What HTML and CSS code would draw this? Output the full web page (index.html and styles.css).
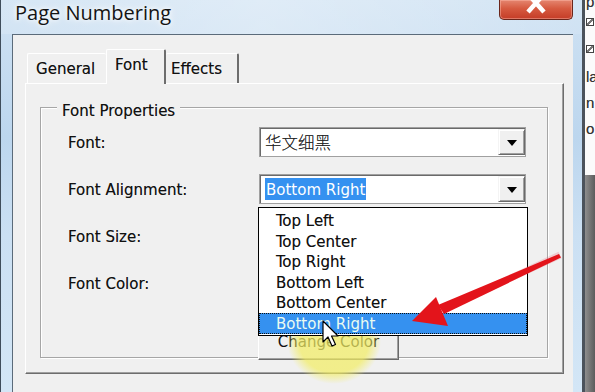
FILE: index.html
```html
<!DOCTYPE html>
<html>
<head>
<meta charset="utf-8">
<title>Page Numbering</title>
<link rel="stylesheet" href="styles.css">
</head>
<body>
<div class="screen">
  <div class="window">
    <div class="titlebar">
      <span class="title">Page Numbering</span>
      <div class="close">
        <svg width="20" height="14" viewBox="0 0 20 14"><path d="M2 -6 L18 12 M18 -6 L2 12" stroke="#fff" stroke-width="4.5" fill="none"/></svg>
      </div>
    </div>
    <div class="client">
      <div class="tabctl">
        <div class="tabs">
          <div class="tab tab-general">General</div>
          <div class="tab tab-font">Font</div>
          <div class="tab tab-effects">Effects</div>
        </div>
        <div class="panel">
          <div class="group">
            <div class="group-title">Font Properties</div>
            <div class="form">
              <div class="label">Font:</div>
              <div class="combo">
                <span class="val cjk">华文细黑</span>
                <span class="drop"><svg width="10" height="6" viewBox="0 0 10 6"><path d="M0 0 H10 L5 6 Z" fill="#000"/></svg></span>
              </div>
              <div class="label">Font Alignment:</div>
              <div class="combo">
                <span class="val"><span class="sel">Bottom Right</span></span>
                <span class="drop"><svg width="10" height="6" viewBox="0 0 10 6"><path d="M0 0 H10 L5 6 Z" fill="#000"/></svg></span>
                <ul class="list">
                  <li>Top Left</li>
                  <li>Top Center</li>
                  <li>Top Right</li>
                  <li>Bottom Left</li>
                  <li>Bottom Center</li>
                  <li class="on">Bottom Right</li>
                </ul>
              </div>
              <div class="label">Font Size:</div>
              <div class="combo">
                <span class="val"></span>
                <span class="drop"><svg width="10" height="6" viewBox="0 0 10 6"><path d="M0 0 H10 L5 6 Z" fill="#000"/></svg></span>
              </div>
              <div class="label">Font Color:</div>
              <div class="swatch"></div>
              <button class="btn">Change Color</button>
            </div>
          </div>
        </div>
      </div>
    </div>
  </div>
  <div class="desk">
    <div class="page">
      <span class="frag frag-pr">pr</span>
      <span class="chk"></span>
      <span class="chk chk2"></span>
      <span class="frag frag-la">la</span>
      <span class="frag frag-n">n</span>
      <span class="frag frag-o">o</span>
    </div>
    <div class="shade"></div>
  </div>

  <div class="spot"></div>
  <svg class="arrow" width="595" height="392" viewBox="0 0 595 392">
    <path d="M560 255 L442 310" stroke="rgba(235,90,110,0.25)" stroke-width="7" fill="none"/>
    <path d="M559 254 L561 257.5 L444 314 L438 305 Z" fill="#e3141b"/>
    <path d="M412 321 L436 297 L448 326 Z" fill="#e3141b"/>
  </svg>
  <svg class="cursor" width="18" height="28" viewBox="0 0 18 28">
    <path d="M1 1 L1 22 L6 17 L10 26 L13.5 24.5 L9.5 16 L16 16 Z" fill="#fff" stroke="#000" stroke-width="1.2" stroke-linejoin="round"/>
  </svg>
</div>
</body>
</html>
```

FILE: styles.css
```css
* {
  box-sizing: border-box;
  margin: 0;
  padding: 0;
}

html, body {
  width: 595px;
  height: 392px;
  overflow: hidden;
}

body {
  font-family: "DejaVu Sans Condensed", "DejaVu Sans", sans-serif;
  font-stretch: semi-condensed;
  font-size: 16.7px;
  color: #111;
  text-shadow: 0 0 0.6px rgba(0, 0, 0, 0.45);
  background: #fff;
}

.screen {
  position: relative;
  display: flex;
  width: 595px;
  height: 392px;
}

/* window frame */
.window {
  width: 585px;
  display: flex;
  flex-direction: column;
  border-left: 1px solid #3f4d5b;
  border-right: 3px solid #4b535c;
  background: linear-gradient(180deg, #cfe2f3 0%, #bcd6ee 35%, #cbe0f3 60%, #d3e6f6 100%);
}

.titlebar {
  height: 34px;
  flex: none;
  display: flex;
  justify-content: space-between;
  align-items: flex-start;
  padding: 0 9px 0 14px;
  background: linear-gradient(90deg, rgba(255,255,255,0.15), rgba(255,255,255,0.35) 45%, rgba(255,255,255,0.1));
}

.title {
  font-family: "Open Sans", sans-serif;
  font-stretch: normal;
  font-size: 20px;
  line-height: 26px;
  color: #141414;
  text-shadow: 0 0 8px #fff, 0 0 4px #fff;
}

.close {
  width: 74px;
  height: 20px;
  display: flex;
  justify-content: center;
  align-items: flex-start;
  background: linear-gradient(180deg, #e58670 0%, #d65a40 45%, #c43c27 100%);
  border: 1px solid #6a261b;
  border-top: none;
  border-radius: 0 0 5px 5px;
  box-shadow: inset 0 0 0 1px rgba(255, 190, 175, 0.45);
}

.client {
  flex: 1;
  margin: 0 9px 0 11px;
  background: #f0f0f0;
  border-top: 1px solid #5b6b7a;
  border-left: 1px solid #5b6b7a;
  padding: 13px 0 0 12px;
}

/* tabs */
.tabctl {
  width: 539px;
}

.tabs {
  display: flex;
  align-items: flex-end;
  height: 35px;
  padding-left: 2px;
}

.tab {
  height: 30px;
  line-height: 29px;
  border-top: 1px solid #fff;
  border-left: 1px solid #fff;
  border-radius: 2px 2px 0 0;
  white-space: nowrap;
}

.tab-general {
  width: 79px;
  padding-left: 8px;
}

.tab-font {
  position: relative;
  z-index: 1;
  width: 60px;
  height: 35px;
  margin-bottom: -1px;
  padding-left: 8px;
  background: #f0f0f0;
  border-right: 2px solid #6d6d6d;
}

.tab-effects {
  width: 73px;
  padding-left: 5px;
  border-left: none;
  border-right: 2px solid #6d6d6d;
}

.panel {
  border-top: 1px solid #fff;
  border-left: 1px solid #fff;
  border-right: 1px solid #6d6d6d;
  border-bottom: 1px solid #6d6d6d;
  box-shadow: inset -1px -1px 0 #a0a0a0;
}

/* group box */
.group {
  margin: 23px 15px 15px 14px;
  border: 1px solid #a6a6a6;
  box-shadow: 1px 1px 0 #fff, inset 1px 1px 0 #fff;
  padding: 0 0 12px 27px;
}

.group-title {
  width: fit-content;
  margin: -8px 0 0 -11px;
  padding: 0 5px;
  line-height: 20px;
  background: #f0f0f0;
}

.form {
  display: grid;
  grid-template-columns: 190px 268px;
  grid-auto-rows: 30px;
  row-gap: 17px;
  margin-top: 7px;
}

.label {
  line-height: 30px;
  white-space: nowrap;
}

.combo {
  position: relative;
  height: 30px;
  margin-left: 1px;
  width: 267px;
  display: flex;
  align-items: center;
  justify-content: space-between;
  padding: 1px 0 1px 5px;
  background: #fff;
  border: 1px solid #a0a0a0;
  box-shadow: inset 1px 1px 0 #6a6a6a;
}

.val {
  line-height: 22px;
  white-space: nowrap;
}

.cjk {
  font-family: "Noto Sans CJK SC", sans-serif;
  font-size: 16.5px;
  font-weight: 300;
  color: #222;
}

.sel {
  display: inline-block;
  background: #3591f0;
  color: #fff;
  text-shadow: none;
  padding: 0 1px;
}

.drop {
  width: 27px;
  height: 26px;
  display: flex;
  align-items: center;
  justify-content: center;
  background: #f0f0f0;
  border: 1px solid;
  border-color: #f4f4f4 #6a6a6a #6a6a6a #f4f4f4;
  box-shadow: inset 1px 1px 0 #fff, inset -1px -1px 0 #a0a0a0;
}

.drop svg {
  margin-top: 1px;
}

.list {
  position: absolute;
  left: -2px;
  top: 32px;
  width: 270px;
  z-index: 5;
  list-style: none;
  background: #fff;
  border: 1px solid #000;
  padding: 2px 0 1px;
}

.list li {
  height: 20.6px;
  line-height: 20.6px;
  padding-left: 17px;
  white-space: nowrap;
}

.list li.on {
  background: #3591f0;
  color: #eafbf0;
  text-shadow: none;
  outline: 1px dotted #111;
  outline-offset: -1px;
}

.swatch {
  margin-left: 1px;
  width: 60px;
  height: 30px;
  background: #000;
}

.btn {
  grid-column: 2;
  width: 141px;
  height: 39px;
  margin-top: 6px;
  font: inherit;
  color: #111;
  background: #f0f0f0;
  border: 1px solid;
  border-color: #fff #6a6a6a #6a6a6a #fff;
  box-shadow: inset -1px -1px 0 #a0a0a0;
}

/* background document at the right edge */
.desk {
  width: 10px;
  display: flex;
  flex-direction: column;
  overflow: hidden;
}

.page {
  height: 175px;
  flex: none;
  display: flex;
  flex-direction: column;
  align-items: flex-start;
  background: #fbfbfb;
  font-family: "Liberation Sans", sans-serif;
  font-stretch: normal;
  font-size: 15px;
  color: #333;
  padding-left: 1px;
}

.frag {
  line-height: 16px;
}

.frag-pr { margin-top: -6px; }
.frag-la { margin-top: 16px; }
.frag-n { margin-top: 10px; }
.frag-o { margin-top: 10px; }

.chk {
  width: 8px;
  height: 8px;
  margin-top: 8px;
  border: 1px solid #444;
  background: linear-gradient(135deg, #fff 40%, #777 40%, #777 60%, #fff 60%);
}

.chk2 {
  margin-top: 19px;
}

.shade {
  flex: 1;
  background: linear-gradient(90deg, #8e8e8e, #5c5c5c);
}

/* annotations */
.spot {
  position: absolute;
  left: 287px;
  top: 298px;
  width: 94px;
  height: 86px;
  border-radius: 50%;
  z-index: 3;
  background: radial-gradient(closest-side, rgba(242, 237, 100, 0.72) 74%, rgba(242, 237, 100, 0) 100%);
}

.arrow {
  position: absolute;
  left: 0;
  top: 0;
  z-index: 6;
}

.cursor {
  position: absolute;
  left: 322px;
  top: 320px;
  z-index: 7;
}
```
